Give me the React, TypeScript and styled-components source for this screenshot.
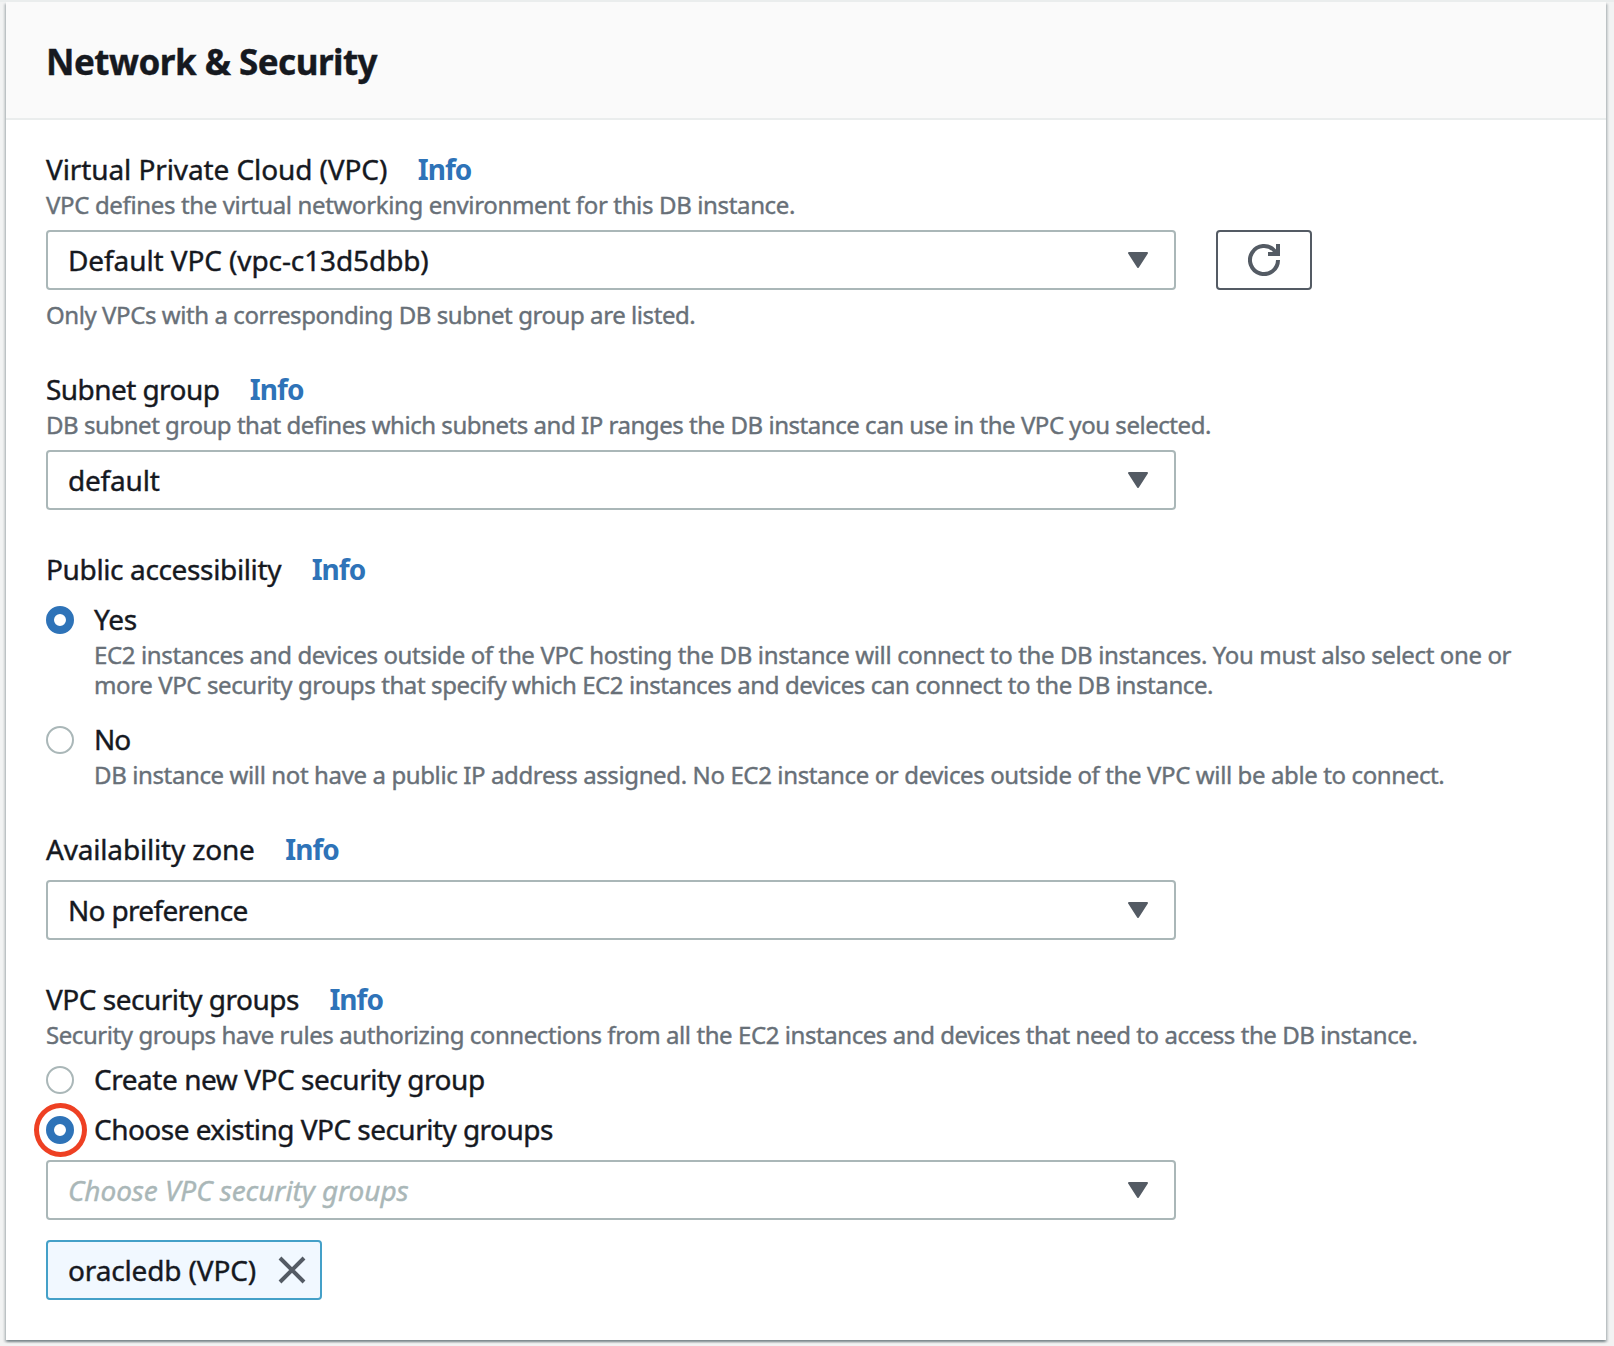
import React, { useState } from "react";
import styled, { createGlobalStyle, css } from "styled-components";

const GlobalStyle = createGlobalStyle`
  *, *::before, *::after { box-sizing: border-box; }
  body {
    margin: 0;
    background: #f2f3f3;
    color: #16191f;
    font-family: "Noto Sans", "Open Sans", sans-serif;
    font-size: 28px;
    line-height: 38px;
    -webkit-text-stroke: 0.4px currentColor;
  }
`;

const Page = styled.main`
  height: 1346px;
  padding: 2px 8px 6px 6px;
  background: linear-gradient(#eaeded 2px, #f2f3f3 2px);
`;

const Panel = styled.section`
  height: 1338px;
  background: #fff;
  box-shadow: 0 2px 2px 0 rgba(0, 28, 36, 0.3), 2px 2px 2px 0 rgba(0, 28, 36, 0.15),
    -2px 2px 2px 0 rgba(0, 28, 36, 0.15);
`;

const PanelHeader = styled.header`
  height: 118px;
  padding: 38px 40px 0;
  background: #fafafa;
  border-bottom: 2px solid #eaeded;
`;

const Title = styled.h2`
  margin: 0;
  font-size: 35px;
  line-height: 44px;
  font-weight: 700;
  letter-spacing: -0.52px;
`;

const Form = styled.div`
  display: flex;
  flex-direction: column;
  gap: 40px;
  padding: 30px 40px 40px;
`;

const Field = styled.div`
  display: flex;
  flex-direction: column;
  align-items: flex-start;
`;

const LabelRow = styled.div`
  display: flex;
  gap: 30.5px;
  height: 40px;
`;

const Text = styled.span<{ $track?: number }>`
  white-space: nowrap;
  letter-spacing: ${(p) => p.$track ?? 0}px;
`;

const InfoLink = styled.a`
  color: #2e73b8;
  font-weight: 700;
  letter-spacing: -0.95px;
  text-decoration: none;
  cursor: pointer;
  -webkit-text-stroke-width: 0;
`;

const Hint = styled.p<{ $track?: number; $after?: boolean }>`
  margin: ${(p) => (p.$after ? "10px 0 0" : "0")};
  color: #687078;
  font-size: 24px;
  line-height: 30px;
  white-space: nowrap;
  letter-spacing: ${(p) => p.$track ?? 0}px;
`;

const ControlRow = styled.div`
  display: flex;
  gap: 40px;
  margin-top: 10px;
`;

const boxed = css`
  display: flex;
  align-items: center;
  height: 60px;
  border: 2px solid #aab7b8;
  border-radius: 4px;
  background: #fff;
  color: inherit;
  font: inherit;
`;

const SelectBox = styled.button<{ $empty?: boolean }>`
  ${boxed}
  justify-content: space-between;
  width: 1130px;
  padding: 0 26px 0 20px;
  text-align: left;
  ${(p) => p.$empty && css`color: #aab7b8; font-style: italic;`}
`;

const RefreshButton = styled.button`
  ${boxed}
  justify-content: center;
  width: 96px;
  padding: 0;
  border-color: #545b64;
`;

const Token = styled.div`
  ${boxed}
  justify-content: space-between;
  width: 276px;
  margin-top: 20px;
  padding: 0 14px 0 20px;
  border-color: #44a0c8;
  background: #f1f8ff;
`;

const CloseButton = styled.button`
  display: flex;
  padding: 0;
  border: 0;
  background: none;
`;

const Options = styled.div<{ $gap: number }>`
  display: flex;
  flex-direction: column;
  gap: ${(p) => p.$gap}px;
  margin-top: 10px;
`;

const Option = styled.div`
  display: grid;
  grid-template-columns: 28px auto;
  column-gap: 20px;
`;

const RadioHolder = styled.div`
  position: relative;
  height: 28px;
  margin-top: 6px;
`;

const Radio = styled.button<{ $on: boolean }>`
  display: block;
  width: 28px;
  height: 28px;
  padding: 0;
  border: ${(p) => (p.$on ? "8px solid #2e73b8" : "2px solid #aab7b8")};
  border-radius: 50%;
  background: #fff;
`;

const Ring = styled.span`
  position: absolute;
  left: -12px;
  top: -13px;
  width: 53px;
  height: 54px;
  border: 5px solid #ee4023;
  border-radius: 50%;
  pointer-events: none;
`;

const OptionBody = styled.div`
  display: flex;
  flex-direction: column;
`;

const OptionLabel = styled(Text)`
  height: 40px;
`;

const Caret = () => (
  <svg width="20" height="16" viewBox="0 0 20 16" fill="#545b64" stroke="#545b64" strokeWidth="2" strokeLinejoin="round">
    <path d="M1 1h18l-9 14z" />
  </svg>
);

const RefreshIcon = () => (
  <svg width="32" height="32" viewBox="0 0 32 32" fill="none" stroke="#545b64" strokeWidth="4">
    <path d="M30 16A14 14 0 1 1 26.5 6.8L29 10" />
    <path d="M20 10h10V0" />
  </svg>
);

const CloseIcon = () => (
  <svg width="28" height="28" viewBox="0 0 28 28" stroke="#545b64" strokeWidth="4">
    <path d="M2 2l24 24M26 2L2 26" />
  </svg>
);

type LabelProps = { text: string; track?: number };

const Label = ({ text, track }: LabelProps) => (
  <LabelRow>
    <Text $track={track}>{text}</Text>
    <InfoLink>Info</InfoLink>
  </LabelRow>
);

const Select = ({ value, track, empty }: { value: string; track?: number; empty?: boolean }) => (
  <SelectBox type="button" $empty={empty}>
    <Text $track={track}>{value}</Text>
    <Caret />
  </SelectBox>
);

type RadioOptionProps = {
  label: string;
  on: boolean;
  onPick: () => void;
  ringed?: boolean;
  track?: number;
  children?: React.ReactNode;
};

const RadioOption = ({ label, on, onPick, ringed, track, children }: RadioOptionProps) => (
  <Option>
    <RadioHolder>
      <Radio type="button" role="radio" aria-checked={on} $on={on} onClick={onPick} />
      {ringed && <Ring />}
    </RadioHolder>
    <OptionBody>
      <OptionLabel $track={track}>{label}</OptionLabel>
      {children}
    </OptionBody>
  </Option>
);

export default function App() {
  const [isPublic, setPublic] = useState(true);
  const [existing, setExisting] = useState(true);

  return (
    <Page>
      <GlobalStyle />
      <Panel>
        <PanelHeader>
          <Title>Network &amp; Security</Title>
        </PanelHeader>
        <Form>
          <Field>
            <Label text="Virtual Private Cloud (VPC)" track={-0.1} />
            <Hint $track={-0.356}>VPC defines the virtual networking environment for this DB instance.</Hint>
            <ControlRow>
              <Select value="Default VPC (vpc-c13d5dbb)" track={-0.1} />
              <RefreshButton type="button" aria-label="Refresh">
                <RefreshIcon />
              </RefreshButton>
            </ControlRow>
            <Hint $after $track={-0.426}>Only VPCs with a corresponding DB subnet group are listed.</Hint>
          </Field>

          <Field>
            <Label text="Subnet group" track={-0.56} />
            <Hint $track={-0.46}>DB subnet group that defines which subnets and IP ranges the DB instance can use in the VPC you selected.</Hint>
            <ControlRow>
              <Select value="default" track={-0.2} />
            </ControlRow>
          </Field>

          <Field>
            <Label text="Public accessibility" track={-0.36} />
            <Options $gap={20}>
              <RadioOption label="Yes" track={-0.3} on={isPublic} onPick={() => setPublic(true)}>
                <Hint $track={-0.37}>EC2 instances and devices outside of the VPC hosting the DB instance will connect to the DB instances. You must also select one or</Hint>
                <Hint $track={-0.4}>more VPC security groups that specify which EC2 instances and devices can connect to the DB instance.</Hint>
              </RadioOption>
              <RadioOption label="No" track={-1} on={!isPublic} onPick={() => setPublic(false)}>
                <Hint $track={-0.38}>DB instance will not have a public IP address assigned. No EC2 instance or devices outside of the VPC will be able to connect.</Hint>
              </RadioOption>
            </Options>
          </Field>

          <Field>
            <Label text="Availability zone" track={-0.18} />
            <ControlRow>
              <Select value="No preference" track={-0.67} />
            </ControlRow>
          </Field>

          <Field>
            <Label text="VPC security groups" track={-0.49} />
            <Hint $track={-0.43}>Security groups have rules authorizing connections from all the EC2 instances and devices that need to access the DB instance.</Hint>
            <Options $gap={10}>
              <RadioOption label="Create new VPC security group" track={-0.46} on={!existing} onPick={() => setExisting(false)} />
              <RadioOption label="Choose existing VPC security groups" track={-0.53} on={existing} onPick={() => setExisting(true)} ringed />
            </Options>
            <ControlRow>
              <Select value="Choose VPC security groups" track={-0.08} empty />
            </ControlRow>
            <Token>
              <Text $track={-0.15}>oracledb (VPC)</Text>
              <CloseButton type="button" aria-label="Remove oracledb (VPC)">
                <CloseIcon />
              </CloseButton>
            </Token>
          </Field>
        </Form>
      </Panel>
    </Page>
  );
}
